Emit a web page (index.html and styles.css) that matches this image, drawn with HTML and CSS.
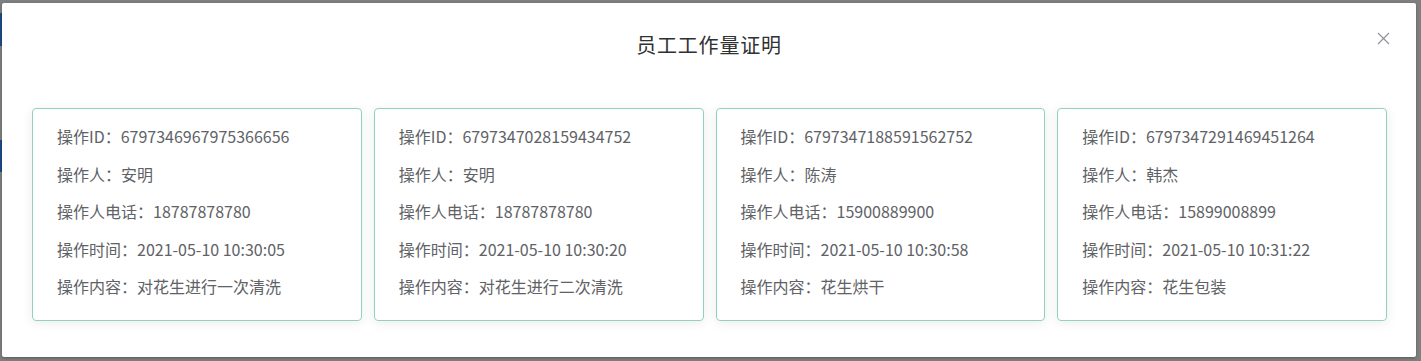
FILE: index.html
```html
<!DOCTYPE html>
<html lang="zh-CN">
<head>
    <meta charset="UTF-8">
    <meta name="viewport" content="width=device-width, initial-scale=1.0">
    <title>员工工作量证明</title>
    <link rel="stylesheet" href="styles.css">
</head>
<body>

<div class="dialog">
    <div class="dialog-header">
        <span class="dialog-title">员工工作量证明</span>
        <span class="dialog-close">
            <svg width="13" height="13" viewBox="0 0 13 13"><path d="M1 1L12 12M12 1L1 12" stroke="#909399" stroke-width="1.2" fill="none"/></svg>
        </span>
    </div>

    <div class="dialog-body">
        <div class="card">
            <p>操作ID：6797346967975366656</p>
            <p>操作人：安明</p>
            <p>操作人电话：18787878780</p>
            <p>操作时间：2021-05-10 10:30:05</p>
            <p>操作内容：对花生进行一次清洗</p>
        </div>
        <div class="card">
            <p>操作ID：6797347028159434752</p>
            <p>操作人：安明</p>
            <p>操作人电话：18787878780</p>
            <p>操作时间：2021-05-10 10:30:20</p>
            <p>操作内容：对花生进行二次清洗</p>
        </div>
        <div class="card">
            <p>操作ID：6797347188591562752</p>
            <p>操作人：陈涛</p>
            <p>操作人电话：15900889900</p>
            <p>操作时间：2021-05-10 10:30:58</p>
            <p>操作内容：花生烘干</p>
        </div>
        <div class="card">
            <p>操作ID：6797347291469451264</p>
            <p>操作人：韩杰</p>
            <p>操作人电话：15899008899</p>
            <p>操作时间：2021-05-10 10:31:22</p>
            <p>操作内容：花生包装</p>
        </div>
    </div>
</div>

</body>
</html>
```

FILE: styles.css
```css
html, body {
    height: 100%;
}
body {
    margin: 0;
    padding: 3px 5px 4px 2px;
    box-sizing: border-box;
    font-family: "Microsoft YaHei", "Noto Sans CJK SC", "Noto Sans", sans-serif;
    background-color: #7f7f7f;
    background-image:
        linear-gradient(#1d4a86, #1d4a86),
        linear-gradient(#1d4a86, #1d4a86);
    background-size: 2px 33px, 2px 32px;
    background-position: 0 13px, 0 140px;
    background-repeat: no-repeat;
}
.dialog {
    position: relative;
    height: 354px;
    background: #fff;
    border-radius: 2px;
    box-shadow: 0 1px 3px rgba(0, 0, 0, 0.3);
}
.dialog-header {
    padding-top: 28px;
    text-align: center;
    height: 80px;
    box-sizing: border-box;
}
.dialog-title {
    font-size: 20px;
    line-height: 28px;
    color: #303133;
    letter-spacing: 0.8px;
}
.dialog-close {
    position: absolute;
    top: 29px;
    right: 26px;
    display: flex;
}
.dialog-body {
    display: flex;
    gap: 12px;
    padding: 25px 29px 0 30px;
}
.card {
    flex: 1;
    border: 1px solid #93d2ba;
    border-radius: 4px;
    padding: 9px 24px 14px;
    box-shadow: 0 2px 12px rgba(0, 0, 0, 0.08);
}
.card p {
    margin: 0;
    font-size: 16px;
    line-height: 37.6px;
    color: #606266;
    white-space: nowrap;
}
```
